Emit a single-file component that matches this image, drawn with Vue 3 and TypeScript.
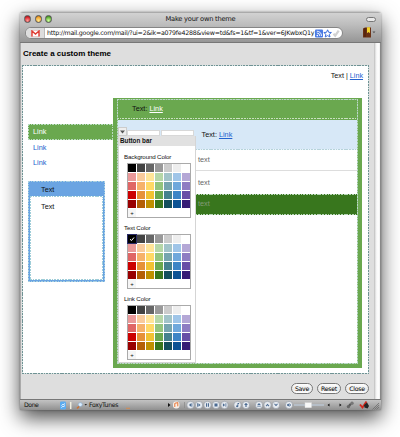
<script setup lang="ts">
const colors: string[] = [
  '#000000', '#434343', '#666666', '#999999', '#cccccc', '#eeeeee', '#ffffff',
  '#ea9999', '#f9cb9c', '#ffe599', '#b6d7a8', '#a2c4c9', '#9fc5e8', '#b4a7d6',
  '#e06666', '#f6b26b', '#ffd966', '#93c47d', '#76a5af', '#6fa8dc', '#8e7cc3',
  '#cc0000', '#e69138', '#f1c232', '#6aa84f', '#45818e', '#3d85c6', '#674ea7',
  '#990000', '#b45f06', '#bf9000', '#38761d', '#134f5c', '#0b5394', '#351c75',
]
const pickers = [
  { label: 'Background Color', selected: -1 },
  { label: 'Text Color', selected: 0 },
  { label: 'Link Color', selected: -1 },
]
const playerButtons = [
  { x: 190.5, g: 'M-1.6 0L.6-1.7V1.7ZM1-1.7h.8v3.4H1Z' },
  { x: 199, g: 'M1.6 0L-.6-1.7V1.7ZM-1.8-1.7h.8v3.4h-.8Z' },
  { x: 207.5, g: 'M-1.5-1.7h1.1v3.4h-1.1ZM.4-1.7h1.1v3.4H.4Z' },
  { x: 216, g: 'M-1.5-1.5h3v3h-3Z' },
  { x: 224.5, g: 'M-1.6-1.7L.6 0-1.6 1.7ZM1-1.7h.8v3.4H1Z' },
  { x: 237.5, g: 'M0-2h1.6v1H.8v2.2a1.1 1.1 0 1 1-.8-1Z' },
  { x: 246, g: 'M0-2.2L1.9 0H.6v2H-.6V0h-1.3Z' },
  { x: 259, g: 'M0-2L1.8 0h-3.6ZM-1.8.7h3.6v.8h-3.6Z' },
  { x: 267.5, g: 'M-1.8 .8L0-1.2 1.8 .8 1.2 1.4 0 .2-1.2 1.4Z' },
  { x: 276, g: 'M-1.8 -.8L0 1.2 1.8-.8 1.2-1.4 0-.2-1.2-1.4Z' },
  { x: 289, g: 'M-2-.7h1.1L.5-2v4L-.9.7H-2ZM1.2-1h.6v2h-.6Z' },
]
</script>

<template>
  <div class="page">
    <div class="window">
      <header class="chrome">
        <div class="titlebar">
          <div class="lights"><i class="red"></i><i class="yellow"></i><i class="green"></i></div>
          <span class="title">Make your own theme</span>
          <i class="pill"></i>
        </div>
        <div class="urlrow">
          <div class="urlbar">
            <span class="gmail">
              <svg width="9" height="7" viewBox="0 0 9 7"><rect x=".5" y=".5" width="8" height="6" fill="#fff" stroke="#e4b5b2" stroke-width=".6" /><path d="M1 6.500V1l3.500 3L8 1v5.500" fill="none" stroke="#df3b32" stroke-width="1.400" /></svg>
            </span>
            <span class="url">http://mail.google.com/mail/?ui=2&amp;ik=a079fe4288&amp;view=td&amp;fs=1&amp;tf=1&amp;ver=6JKwbxQ1y</span>
            <svg class="urlicons" width="25" height="9" viewBox="0 0 25 9">
              <rect x="0" y=".5" width="8" height="8" rx="1" fill="#4b7be4" />
              <path d="M1.800 4a3 3 0 0 1 3 3M1.800 2.200A5 5 0 0 1 6.500 7" fill="none" stroke="#fff" stroke-width=".9" /><circle cx="2.300" cy="6.600" r=".8" fill="#fff" />
              <path d="M12.600.8l1.100 2.500 2.700.2-2.100 1.800.7 2.700-2.400-1.400L10.200 8l.7-2.700L8.800 3.500l2.700-.2Z" fill="#fff" stroke="#3a6ddb" stroke-width="1" />
              <path d="M18.500 4.800l1.700 1.900 3.500-5" fill="none" stroke="#d2d2d2" stroke-width="2.200" />
            </svg>
          </div>
          <svg class="book" width="14" height="12" viewBox="0 0 14 12">
            <path d="M0 1.500L2 .5h6v10H0Z" fill="#6a3013" /><path d="M2 1v9" stroke="#3f190a" stroke-width=".8" />
            <path d="M4 .3h3v6L5.500 5 4 6.300Z" fill="#f4d32b" /><path d="M9.500 4.500h3L11 6.300Z" fill="#555" />
          </svg>
        </div>
      </header>

      <div class="viewport">
        <main class="content">
          <h1>Create a custom theme</h1>
          <section class="preview dash">
            <div class="toplinks">Text | <a>Link</a></div>
            <div class="columns">
              <aside>
                <nav>
                  <div class="navitem active dash">Link</div>
                  <div class="navitem">Link</div>
                  <div class="navitem">Link</div>
                </nav>
                <div class="box dash">
                  <div class="boxhead">Text</div>
                  <div class="boxbody dash">Text</div>
                </div>
              </aside>
              <div class="mail">
                <div class="inner dash">
                  <div class="mailhead">Text:&nbsp;<a>Link</a></div>
                  <div class="mailbar">Text:&nbsp;<a>Link</a></div>
                  <div class="row first">text</div>
                  <div class="row second">text</div>
                  <div class="row dark dash">text</div>
                  <div class="popup">
                    <div class="tabs"><span class="arrow"><svg width="5" height="4"><path d="M0 .5h5L2.500 3.500Z" fill="#555" /></svg></span><i></i><i></i></div>
                    <div class="menu">
                      <div class="menutitle">Button bar</div>
                      <div v-for="p in pickers" :key="p.label" class="picker">
                        <div class="label">{{ p.label }}</div>
                        <div class="palette">
                          <span v-for="(c, i) in colors" :key="i" class="cell" :class="{ chosen: p.selected === i }" :style="{ background: c }">
                            <svg v-if="p.selected === i" width="6" height="6"><path d="M1 3.200l1.500 1.400L5 1.500" fill="none" stroke="#fff" stroke-width="1" /></svg>
                          </span>
                          <span class="plus">+</span>
                        </div>
                      </div>
                    </div>
                  </div>
                </div>
              </div>
            </div>
          </section>
          <div class="actions"><button>Save</button><button>Reset</button><button>Close</button></div>
        </main>
        <div class="scroll"></div>
      </div>

      <footer class="status">
        <span class="done">Done</span>
        <svg class="search" width="30" height="9" viewBox="0 0 30 9">
          <rect x="1" y=".5" width="6" height="8" rx="1.200" fill="#5cacf0" /><path d="M2.500 4.500c1-2 3 0 3-2M2.500 6.500c1-2 3 0 3-2" stroke="#fff" fill="none" />
          <path d="M11.700 1v7" stroke="#f0eee0" stroke-width="1.500" />
          <path d="M18 7.500l2.500-2.500" stroke="#cd7233" stroke-width="1.600" /><circle cx="21.300" cy="3.600" r="2" fill="#d9edff" stroke="#86a9ca" stroke-width=".6" />
          <path d="M25.500 3h2.500l-1.250 1.600Z" fill="#222" />
        </svg>
        <span class="foxy">FoxyTunes</span>
        <svg class="player" width="261" height="10" viewBox="119 0 261 10">
          <path d="M126 8.300h4" stroke="#d88b50" /><path d="M168 3l2.500 2-2.500 2Z" fill="#111" />
          <rect x="173" y="1.500" width="6.500" height="7" rx="3" fill="#f7efe8" /><path d="M174.800 7V3.300l3-.7v3.700" fill="none" stroke="#e87536" />
          <path d="M184.500 2v6" stroke="#888" stroke-width=".7" />
          <g v-for="b in playerButtons" :key="b.x" :transform="`translate(${b.x} 5)`">
            <circle r="3.700" fill="#e5e9ee" stroke="#8d949d" stroke-width=".6" /><path :d="b.g" fill="#4b6b92" />
          </g>
          <path d="M294 5h30" stroke="#bac4d0" stroke-width="1.500" /><rect x="305" y="2.700" width="6.500" height="5" fill="#f8f8f8" stroke="#ddd" stroke-width=".4" />
          <path d="M329.500 3.500v3l-2-1.500ZM339.500 3.500l2 1.500-2 1.500Z" fill="#111" />
          <path d="M347.500 7.500l3.500-3.700" stroke="#555" stroke-width="2.200" /><circle cx="352" cy="3.300" r="1.700" fill="#777" /><circle cx="348.500" cy="6.600" r="1.600" fill="#666" />
          <path d="M360 4.500l2.500 3 4-6" fill="none" stroke="#d3291d" stroke-width="1.900" /><path d="M364 5l3-2.500 2 3.500-1.500 2.500-3-1Z" fill="#252525" />
          <path d="M374.500 9.500l4.500-4.500M376.500 9.500l2.500-2.500M372.500 9.500l6.500-6.500" stroke="#666" stroke-width=".7" />
        </svg>
      </footer>
    </div>
  </div>
</template>

<style>
body { background: #fff; overflow: hidden; }
</style>
<style scoped>
* { box-sizing: border-box; }
.page { width: 400px; height: 437px; padding: 12px 19px 27px 20px; font-family: "Liberation Sans", Arial, sans-serif; font-size: 7.300px; color: #111; overflow: hidden; }
.window { width: 361px; height: 398px; display: flex; flex-direction: column; border-radius: 3px 3px 0 0; box-shadow: 0 0 2px rgba(0,0,0,.4), 0 8px 20px rgba(0,0,0,.7); overflow: hidden; }
.chrome { height: 31px; background: linear-gradient(#d2d2d2, #bdbdbd 40%, #969696); border-top: 1px solid #aaa; border-bottom: 1px solid #777; }
.titlebar { height: 12px; display: grid; grid-template-columns: 70px 1fr 70px; align-items: center; }
.lights { display: flex; gap: 3.400px; padding-left: 4px; }
.lights i { width: 7.200px; height: 7.200px; border-radius: 50%; border: .5px solid #555; }
.red { background: radial-gradient(circle at 50% 75%, #ff9a95, #d8232a 65%, #8f1218); }
.yellow { background: radial-gradient(circle at 50% 75%, #ffe98d, #f0a12e 65%, #9d6010); }
.green { background: radial-gradient(circle at 50% 75%, #d0ff9a, #5eae35 65%, #2c6815); }
.title { text-align: center; font: 6.700px/12px "DejaVu Sans", sans-serif; letter-spacing: -.24px; white-space: nowrap; }
.pill { justify-self: end; width: 10px; height: 5px; border-radius: 3px; border: 1px solid #777; background: #e8e8e8; margin-right: 5px; }
.urlrow { display: flex; align-items: center; padding: 2px 4px 0 5px; }
.urlbar { width: 319px; height: 12px; display: flex; align-items: center; background: #fff; border-radius: 6px; border: 1px solid #858585; overflow: hidden; }
.gmail { flex: none; width: 19px; height: 10px; display: flex; align-items: center; justify-content: center; background: #ddd; padding-left: 1px; border-right: 1px solid #bbb; }
.url { flex: none; width: 270px; padding-left: 2px; font: 6.300px/10px "DejaVu Sans", sans-serif; letter-spacing: -.25px; white-space: nowrap; }
.urlicons { flex: none; }
.book { margin: -1px 0 0 20px; }
.viewport { flex: 1; min-height: 0; display: flex; background: #dedede; border-left: 1px solid #aaa; }
.content { width: 353px; padding: 0 4px 0 1px; }
.scroll { flex: 1; background: linear-gradient(90deg, #bbb, #f2f2f2 35%, #fff 70%, #eee); border-right: 1px solid #888; }
h1 { margin: 0; padding: 6px 0 0 1px; height: 22px; font-size: 8px; line-height: 10px; color: #000; white-space: nowrap; }
.dash { position: relative; --a: #6f9294; --b: #d8e4e2; }
.dash::after {
  content: ''; position: absolute; inset: 0; pointer-events: none;
  background:
    repeating-linear-gradient(90deg, var(--a) 0 1.700px, var(--b) 1.700px 2.700px) top / 100% 1px no-repeat,
    repeating-linear-gradient(90deg, var(--a) 0 1.700px, var(--b) 1.700px 2.700px) bottom / 100% 1px no-repeat,
    repeating-linear-gradient(var(--a) 0 1.700px, var(--b) 1.700px 2.700px) left / 1px 100% no-repeat,
    repeating-linear-gradient(var(--a) 0 1.700px, var(--b) 1.700px 2.700px) right / 1px 100% no-repeat;
}
.preview { width: 347px; height: 309px; background: #fff; padding: 0 6px; }
.toplinks { height: 33px; padding: 6px 0 0; line-height: 10px; text-align: right; font-size: 7.200px; }
a { color: #2362cf; text-decoration: underline; }
.columns { display: flex; }
aside { flex: none; width: 85px; padding-top: 26px; }
.navitem { height: 15px; line-height: 15px; padding-left: 5px; color: #1b62cc; }
.navitem.active { height: 16px; color: #fff; background: #6aa84f; --a: #b9dcc0; --b: #6aa84f; }
.box { width: 77px; height: 101px; margin-top: 11px; background: #6aa4e2; --a: #a9cfdf; --b: #69a5e4; padding: 0 2px 2px; display: flex; flex-direction: column; }
.boxhead { height: 15px; line-height: 17px; padding-left: 11px; }
.boxbody { flex: 1; background: #fff; padding: 6px 0 0 11px; line-height: 10px; --a: #9fcdd8; --b: #fff; }
.mail { flex: none; width: 249px; height: 270px; background: #6aa84f; padding: 1px 4px 4px; }
.inner { height: 265px; background: #fff; display: flex; flex-direction: column; --a: #b9d7c9; --b: #8dbd7c; }
.mailhead { height: 21px; line-height: 20px; background: linear-gradient(#6aa84f, #6aa84f) 0 20px / 100% 1px no-repeat, repeating-linear-gradient(90deg, #c9e0c0 0 1.700px, #6aa84f 1.700px 2.700px) 0 19px / 100% 1px no-repeat, #6aa84f; padding-left: 15px; }
.mailhead a { color: #fff; }
.mailbar { height: 30px; line-height: 29px; background: repeating-linear-gradient(90deg, #b6d3da 0 1.700px, #eaf4fb 1.700px 2.700px) bottom / 100% 1px no-repeat, #d7e8f7; padding-left: 84.500px; }
.row { height: 22px; line-height: 20px; padding-left: 81px; color: #666; }
.row.first { height: 21px; border-bottom: 1px solid #ddd; }
.row.second { height: 23px; line-height: 23px; }
.row.dark { height: 21px; background: #38761d; color: #849b79; --a: #b9d7b9; --b: #38761d; }
.popup { position: absolute; left: 1px; top: 28px; width: 78px; z-index: 2; }
.tabs { height: 9px; display: flex; }
.arrow { width: 9px; display: flex; align-items: center; justify-content: center; background: #eee; border: 1px solid #ccc; }
.tabs i { width: 33px; margin: 3px 1px 0 0; height: 6px; background: #fff; border: 1px solid #d8d8d8; }
.menu { height: 227px; background: #fff; border: 1px solid #d5d5d5; }
.menutitle { height: 10px; line-height: 9px; padding-left: 1px; font-size: 6.300px; font-weight: bold; background: #e1e1e1; margin: -1px 0 5px; }
.picker { height: 71px; padding-left: 5px; }
.label { height: 12px; line-height: 9px; padding-top: 1px; font-size: 6.200px; letter-spacing: -.15px; white-space: nowrap; }
.palette { width: 64px; height: 55px; margin-left: 3px; display: grid; grid-template-columns: repeat(7, 8px); grid-auto-rows: 8px; gap: 1px; background: #fff; border: 1px solid #aaa; padding: 0; }
.cell { display: flex; align-items: center; justify-content: center; }
.chosen { outline: 1px solid #292b68; }
.plus { font: 6px/8px "Liberation Sans", sans-serif; text-align: center; background: #f5f5f5; }
.actions { display: flex; justify-content: flex-end; gap: 4px; padding: 9px 1px 0 0; }
button { height: 11px; border: 1px solid #777; border-radius: 6px; padding: 0; background: linear-gradient(#fff, #e8e8e8 55%, #fff); font: 6.200px/8px "DejaVu Sans", sans-serif; letter-spacing: -.25px; color: #000; width: 22px; }
button:nth-child(2) { width: 24px; }
button:nth-child(3) { width: 24px; }
.status { height: 11px; display: flex; align-items: center; background: linear-gradient(#c3c3c3, #909090); border-top: 1px solid #777; font: 6.200px/10px "DejaVu Sans", sans-serif; }
.done { flex: none; width: 39px; padding-left: 4px; letter-spacing: -.45px; }
.search { flex: none; }
.foxy { flex: none; width: 30px; letter-spacing: -.3px; }
.player { flex: none; }
</style>
